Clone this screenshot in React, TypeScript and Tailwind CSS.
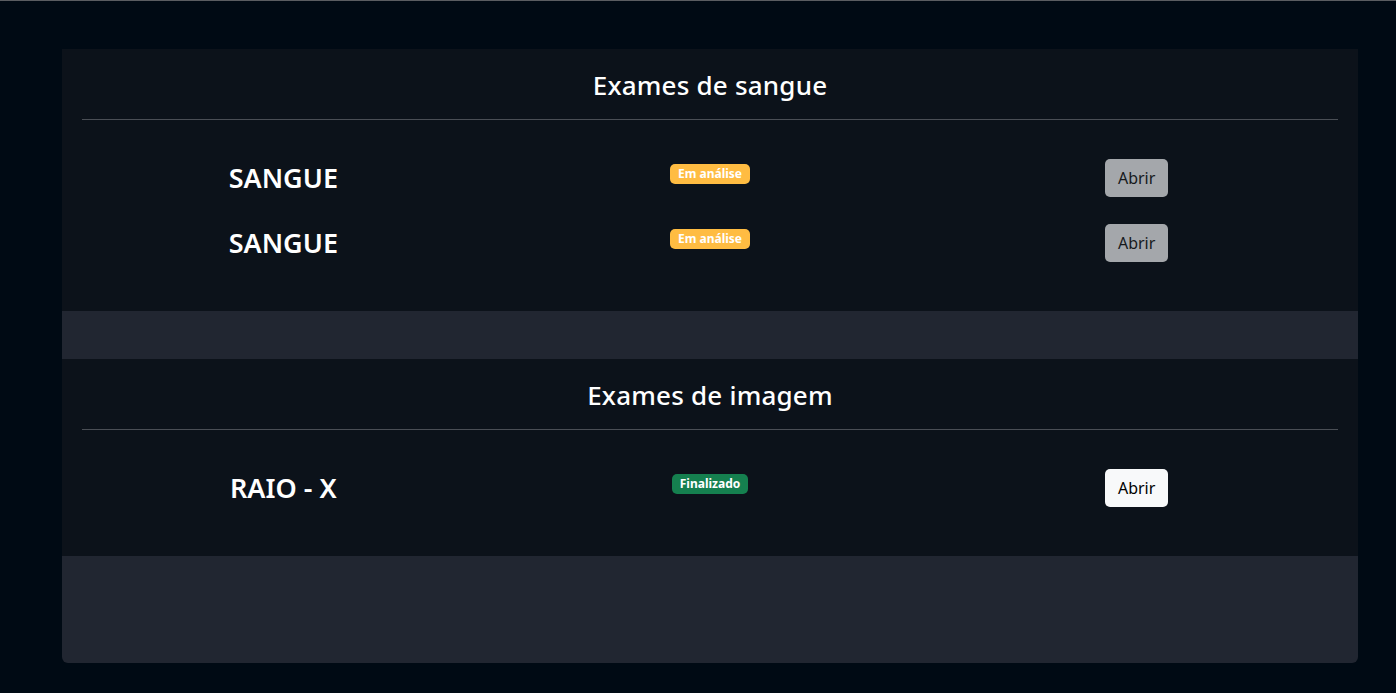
import React from 'react'

interface Exam {
  name: string
  status: 'analise' | 'final'
}

interface Group {
  title: string
  exams: Exam[]
}

const groups: Group[] = [
  {
    title: 'Exames de sangue',
    exams: [
      { name: 'SANGUE', status: 'analise' },
      { name: 'SANGUE', status: 'analise' },
    ],
  },
  {
    title: 'Exames de imagem',
    exams: [{ name: 'RAIO - X', status: 'final' }],
  },
]

const ExamRow: React.FC<{ exam: Exam }> = ({ exam }) => {
  const done = exam.status === 'final'
  return (
    <div className="grid grid-cols-3 h-[65px]">
      <div className="flex items-center justify-center">
        <h4 className="text-[27px] font-semibold text-white leading-none">{exam.name}</h4>
      </div>
      <div className="flex items-center justify-center pb-2">
        {done ? (
          <span className="rounded-[5px] bg-[#15804f] px-[8px] py-[4px] text-[12px] font-bold leading-none text-white">
            Finalizado
          </span>
        ) : (
          <span className="rounded-[5px] bg-[#ffbc42] px-[8px] py-[4px] text-[12px] font-bold leading-none text-white">
            Em análise
          </span>
        )}
      </div>
      <div className="flex items-center justify-center">
        <button
          className={
            done
              ? 'h-[38px] w-[63px] rounded-[5px] bg-[#f8f9fa] text-[16px] text-black'
              : 'h-[38px] w-[63px] rounded-[5px] bg-[#a4a7ab] text-[16px] text-[#16191c]'
          }
        >
          Abrir
        </button>
      </div>
    </div>
  )
}

const ExamGroup: React.FC<{ group: Group }> = ({ group }) => (
  <section className="bg-[#0c121a] px-5 pb-[36px]">
    <h3 className="h-[70px] pt-[19px] text-center text-[26px] font-medium leading-[34px] tracking-[0.2px] text-white">
      {group.title}
    </h3>
    <div className="border-t border-[#4a4e55]" />
    <div className="pt-[25px]">
      <div className="-mx-[12px]">
        {group.exams.map((exam, i) => (
          <ExamRow key={i} exam={exam} />
        ))}
      </div>
    </div>
  </section>
)

export default function App() {
  return (
    <div
      className="min-h-[693px] bg-[#000a14] border-t border-[#5a5d61] pt-[48px] pb-[29px]"
      style={{ fontFamily: '"Noto Sans", "Open Sans", sans-serif' }}
    >
      <div className="ml-[62px] flex h-[614px] w-[1296px] flex-col gap-[48px] overflow-hidden rounded-b-[6px] bg-[#212631]">
        {groups.map(g => (
          <ExamGroup key={g.title} group={g} />
        ))}
      </div>
    </div>
  )
}
